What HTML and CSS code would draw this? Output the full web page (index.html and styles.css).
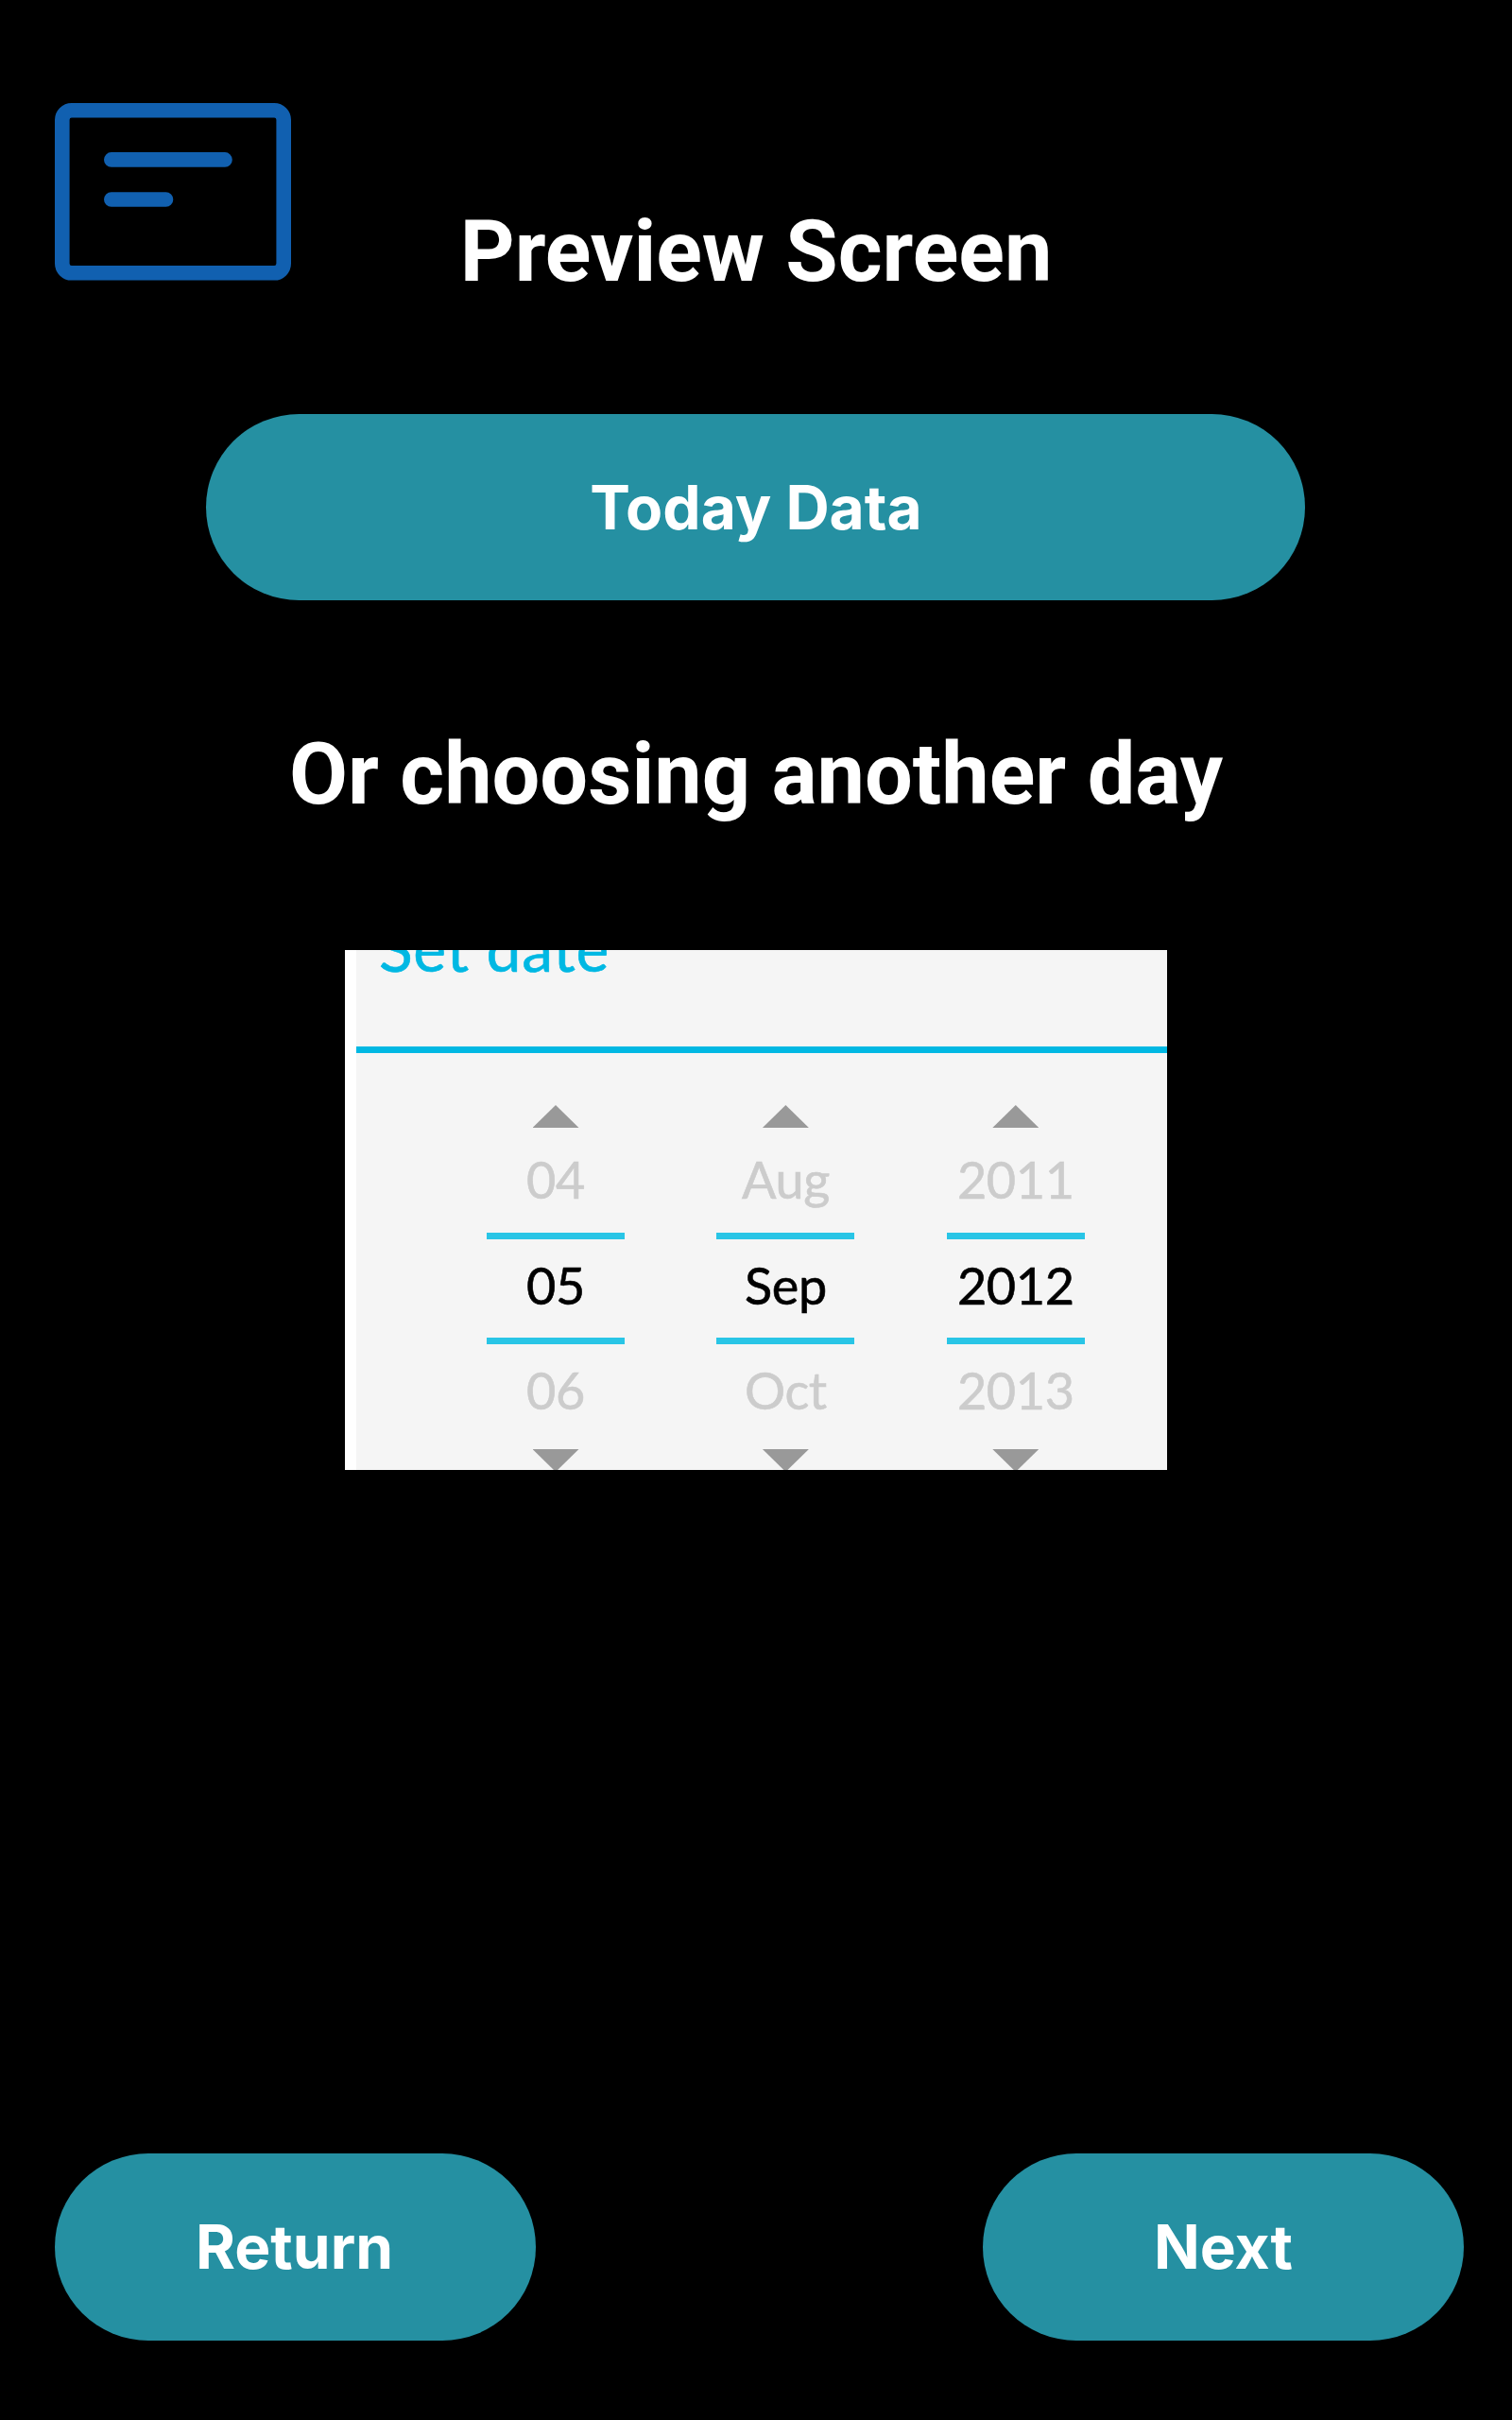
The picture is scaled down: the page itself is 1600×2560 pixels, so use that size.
FILE: index.html
```html
<!DOCTYPE html>
<html lang="en">
<head>
<meta charset="utf-8">
<title>Preview Screen</title>
<link rel="stylesheet" href="styles.css">
</head>
<body>
<main class="screen">
  <header class="header">
    <svg class="card-icon" viewBox="0 0 250 188" aria-hidden="true">
      <rect x="7.8" y="7.8" width="234.4" height="172" rx="10"/>
      <path d="M59.8 59.9H180M59.8 102H117.5"/>
    </svg>
    <h1 class="heading">Preview Screen</h1>
  </header>
  <button class="button button-wide">Today Data</button>
  <h2 class="heading subheading">Or choosing another day</h2>
  <section class="picker">
    <div class="picker-title">Set date</div>
    <div class="columns">
      <div class="column">
        <i class="arrow up"></i>
        <span class="value">04</span>
        <span class="value current">05</span>
        <span class="value after">06</span>
        <i class="arrow down"></i>
      </div>
      <div class="column">
        <i class="arrow up"></i>
        <span class="value">Aug</span>
        <span class="value current">Sep</span>
        <span class="value after">Oct</span>
        <i class="arrow down"></i>
      </div>
      <div class="column">
        <i class="arrow up"></i>
        <span class="value">2011</span>
        <span class="value current">2012</span>
        <span class="value after">2013</span>
        <i class="arrow down"></i>
      </div>
    </div>
  </section>
  <footer class="footer">
    <button class="button button-return">Return</button>
    <button class="button">Next</button>
  </footer>
</main>
</body>
</html>
```
FILE: styles.css
```css
* { box-sizing: border-box; }

body {
  margin: 0;
  background: #000;
  color: #fff;
}

.screen {
  display: flex;
  flex-direction: column;
  align-items: center;
  width: 1600px;
  height: 2560px;
  padding: 109px 51px 84px 58px;
  overflow: hidden;
}

.header {
  display: grid;
  grid-template-columns: 250px 1fr 250px;
  align-self: stretch;
  height: 329px;
  margin-right: 7px;
}

.card-icon {
  width: 250px;
  height: 188px;
  fill: none;
  stroke: #1160b0;
  stroke-width: 15.6;
  stroke-linecap: round;
}

.heading {
  margin: 0;
  font: 700 90px/106px Roboto, sans-serif;
  text-align: center;
  white-space: nowrap;
}

.header .heading { padding-top: 105px; }

.button {
  flex: none;
  width: 509px;
  height: 198px;
  padding: 0;
  border: 0;
  border-radius: 99px;
  background: #2590a2;
  color: #fff;
  font: 700 64px/78px Inter, sans-serif;
}

.button-wide {
  width: 1163px;
  height: 197px;
  margin-right: 9px;
  padding: 1px 0 0 2px;
}

.button-return { padding-right: 2px; }

.subheading {
  margin: 132px 7px 0 0;
}

.picker {
  flex: none;
  display: flex;
  flex-direction: column;
  width: 870px;
  height: 550px;
  margin: 132px 7px 0 0;
  overflow: hidden;
  border-left: 12px solid #fff;
  background: #f5f5f5;
  color: #ccc;
  font-family: Lato, sans-serif;
  -webkit-text-stroke: 0.6px;
}

/* The title sits partly above the picker's visible window. */
.picker-title {
  flex: none;
  display: flex;
  align-items: flex-end;
  height: 109px;
  padding: 0 0 64px 24px;
  border-bottom: 7px solid #00b8e3;
  color: #00b8e3;
  font-size: 66px;
  letter-spacing: 0.7px;
  line-height: 80px;
}

.columns {
  flex: none;
  display: grid;
  grid-template-columns: repeat(3, 146px);
  column-gap: 97.4px;
  padding: 55px 0 0 138px;
}

.column {
  display: flex;
  flex-direction: column;
  align-items: center;
}

.arrow {
  width: 49px;
  height: 24px;
  background: #999;
}

.up { clip-path: polygon(50% 0, 100% 100%, 0 100%); }
.down { clip-path: polygon(0 0, 100% 0, 50% 100%); }

.value {
  width: 146px;
  height: 111px;
  font-size: 54px;
  letter-spacing: -0.4px;
  line-height: 109px;
  text-align: center;
}

.value.current {
  height: 118px;
  border: solid #29c5e6;
  border-width: 7px 0;
  color: #000;
  line-height: 98px;
}

.value.after { line-height: 97px; }

.footer {
  display: flex;
  justify-content: space-between;
  align-self: stretch;
  margin-top: auto;
}
```
